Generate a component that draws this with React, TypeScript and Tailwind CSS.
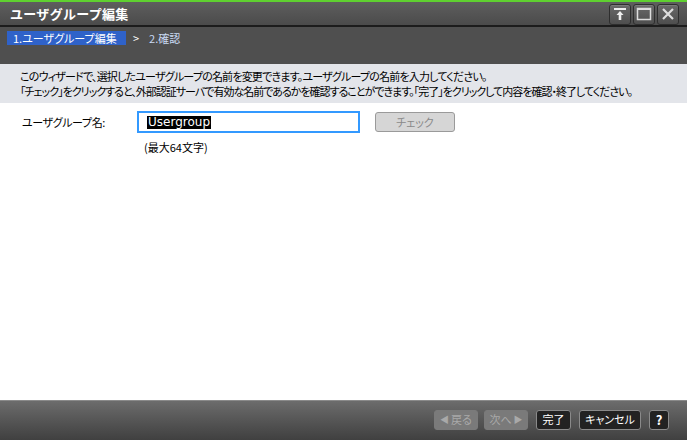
import React from 'react';

const jp = { fontFamily: '"Noto Sans CJK JP", "Liberation Sans", sans-serif' };

const WinButton = ({ children }: { children: React.ReactNode }) => (
  <div className="w-[22px] h-[21px] rounded-[3px] border border-[#2e2e2e] bg-gradient-to-b from-[#6a6a6a] to-[#4e4e4e] flex items-center justify-center text-[#e8e8e8] shadow-[inset_0_1px_0_#7a7a7a]">
    {children}
  </div>
);

const FooterButton = ({ children, disabled, className = '' }: { children: React.ReactNode; disabled?: boolean; className?: string }) => (
  <button
    className={`h-[20px] rounded-[3px] border text-[11px] flex items-center justify-center [font-feature-settings:'palt'] ${
      disabled ? 'bg-[#7a7a7a] border-[#7a7a7a] text-[#a9a9a9]' : 'bg-[#222] border-[#8a8a8a] text-white'
    } ${className}`}
  >
    {children}
  </button>
);

export default function App() {
  return (
    <div className="w-[687px] h-[440px] flex flex-col bg-white overflow-hidden" style={jp}>
      {/* title */}
      <div className="h-[2px] bg-[#5fd030]" />
      <div className="h-[25px] bg-gradient-to-b from-[#5e5e5e] to-[#4b4b4b] flex items-center justify-between pl-[10px] pr-[8px] border-b-2 border-[#1c1c1c]">
        <span className="text-white font-bold text-[13px] tracking-[0.3px]">ユーザグループ編集</span>
        <div className="flex gap-[2px] pt-[1px]">
          <WinButton>
            <svg width="14" height="14" viewBox="0 0 14 14">
              <rect x="1" y="1" width="12" height="2" fill="#eee" />
              <path d="M7 4 L10.5 8 H8.3 V13 H5.7 V8 H3.5 Z" fill="#eee" />
            </svg>
          </WinButton>
          <WinButton>
            <svg width="16" height="14" viewBox="0 0 16 14">
              <rect x="1.5" y="1.5" width="13" height="11" fill="none" stroke="#ddd" strokeWidth="1.5" />
              <rect x="1" y="1" width="14" height="2" fill="#ddd" />
            </svg>
          </WinButton>
          <WinButton>
            <svg width="14" height="14" viewBox="0 0 14 14">
              <path d="M2 2 L12 12 M12 2 L2 12" stroke="#ddd" strokeWidth="2.2" />
            </svg>
          </WinButton>
        </div>
      </div>

      {/* steps */}
      <div className="h-[37px] bg-[#4f4f4f] flex items-start pt-[4px] pl-[7px] text-[11px] [font-feature-settings:'palt']">
        <div className="w-[119px] h-[14px] bg-[#2f62c9] text-white pl-[6px] leading-[14px]">1.ユーザグループ編集</div>
        <span className="ml-[7px] text-white leading-[14px]">&gt;</span>
        <span className="ml-[10px] text-[#c9daf3] leading-[14px]">2.確認</span>
      </div>

      {/* description */}
      <div className="h-[39px] bg-[#e3e5ea] pl-[20px] pt-[5px] text-[11px] leading-[15px] text-black whitespace-nowrap [font-feature-settings:'palt']">
        <p className="tracking-[-0.8px]">このウィザードで、選択したユーザグループの名前を変更できます。ユーザグループの名前を入力してください。</p>
        <p className="tracking-[-1px]">「チェック」をクリックすると、外部認証サーバで有効な名前であるかを確認することができます。「完了」をクリックして内容を確認・終了してください。</p>
      </div>

      {/* content */}
      <div className="flex-1 pt-[8px] pl-[22px] text-[11px] text-black [font-feature-settings:'palt']">
        <div className="flex items-center">
          <span className="w-[115px] tracking-[-0.4px]">ユーザグループ名:</span>
          <div className="w-[223px] h-[22px] border-2 border-[#3399ff] bg-white flex items-center pl-[8px]">
            <span className="bg-black text-white px-[1px] leading-[13px] text-[12px]" style={{ fontFamily: '"DejaVu Sans", sans-serif' }}>Usergroup</span>
          </div>
          <button className="ml-[15px] w-[80px] h-[20px] rounded-[3px] border border-[#9a9a9a] bg-[#d6d6d6] text-[#8a8a8a] text-[11px]">チェック</button>
        </div>
        <div className="pl-[122px] pt-[6px]">(最大64文字)</div>
      </div>

      {/* footer */}
      <div className="h-[40px] bg-gradient-to-b from-[#6c6c6c] to-[#404040] border-t border-[#8a8a8a] flex items-center justify-end gap-[6px] pr-[18px] pb-[2px]">
        <FooterButton disabled className="w-[44px] gap-[2px]">
          <span className="text-[9px]">◀</span>戻る
        </FooterButton>
        <FooterButton disabled className="w-[44px] gap-[2px]">
          次へ<span className="text-[9px]">▶</span>
        </FooterButton>
        <FooterButton className="w-[35px] ml-[2px]">完了</FooterButton>
        <FooterButton className="w-[62px] ml-[2px]">キャンセル</FooterButton>
        <FooterButton className="w-[20px] ml-[2px] font-bold text-[13px]">?</FooterButton>
      </div>
    </div>
  );
}
